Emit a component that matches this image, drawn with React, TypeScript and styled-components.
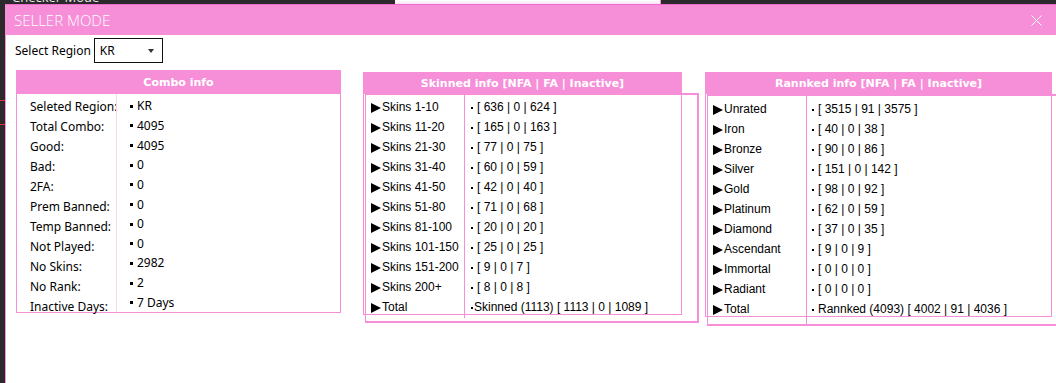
import styled, { createGlobalStyle } from "styled-components";

const PINK = "#f68fd8";

const GlobalStyle = createGlobalStyle`
  html, body {
    margin: 0;
    padding: 0;
    background: #2c292c;
    overflow: hidden;
  }
`;

const Desktop = styled.div`
  width: 1056px;
  height: 383px;
  display: flex;
  flex-direction: column;
  overflow: hidden;
`;

const TopStrip = styled.div`
  height: 4px;
  display: flex;
  flex-shrink: 0;
`;

const StripPart = styled.div<{ $w: number; $light?: boolean }>`
  width: ${(p) => p.$w}px;
  flex-shrink: 0;
  height: 4px;
  overflow: hidden;
  background: ${(p) => (p.$light ? "linear-gradient(#ffffff, #fbe3f5)" : "#2c292c")};
  border-right: ${(p) => (p.$light ? `1px solid ${PINK}` : "none")};
`;

const BgTitle = styled.span`
  display: block;
  margin: -10px 0 0 12px;
  font-family: "Open Sans", sans-serif;
  font-size: 13px;
  line-height: 14px;
  color: #e8e8e8;
  white-space: nowrap;
`;

const MainRow = styled.div`
  flex: 1;
  display: flex;
  min-height: 0;
`;

const LeftStrip = styled.div`
  width: 5px;
  flex-shrink: 0;
  display: flex;
  flex-direction: column;
  padding-top: 96px;
  gap: 23px;
`;

const RedMark = styled.div`
  height: 1px;
  background: #e0303a;
`;

const Window = styled.div`
  flex: 1;
  display: flex;
  flex-direction: column;
  background: #fff;
  border-left: 1px solid ${PINK};
  border-top: 1px solid #ee6acc;
  overflow: hidden;
`;

const TitleBar = styled.div`
  height: 30px;
  flex-shrink: 0;
  background: ${PINK};
  display: flex;
  align-items: center;
  justify-content: space-between;
  padding: 0 14px 0 8px;
`;

const Title = styled.span`
  font-family: "Open Sans", sans-serif;
  font-weight: 300;
  font-size: 15px;
  color: #fff;
`;

const Content = styled.div`
  padding: 3px 0 0 9px;
  display: flex;
  flex-direction: column;
`;

const RegionRow = styled.div`
  display: flex;
  align-items: center;
  height: 25px;
  gap: 3px;
`;

const RegionLabel = styled.span`
  font-family: "Noto Sans", sans-serif;
  font-size: 12px;
  color: #000;
`;

const Combo = styled.div`
  display: flex;
  align-items: center;
  justify-content: space-between;
  padding: 0 8px 0 5px;
  box-sizing: border-box;
  width: 69px;
  height: 25px;
  border: 1px solid #111;
  font-family: "Noto Sans", sans-serif;
  font-size: 12px;
  color: #000;
`;

const Caret = styled.span`
  width: 0;
  height: 0;
  border-left: 3px solid transparent;
  border-right: 3px solid transparent;
  border-top: 4px solid #333;
`;

const PanelRow = styled.div`
  display: flex;
  align-items: flex-start;
  padding-left: 1px;
  margin-top: 7px;
`;

const Panel = styled.div<{ $w: number; $ml: number; $mt: number }>`
  position: relative;
  width: ${(p) => p.$w}px;
  margin-left: ${(p) => p.$ml}px;
  margin-top: ${(p) => p.$mt}px;
  flex-shrink: 0;
`;

const Header = styled.div<{ $h: number }>`
  height: ${(p) => p.$h}px;
  background: ${PINK};
  display: flex;
  align-items: center;
  justify-content: center;
  font-family: "DejaVu Sans", sans-serif;
  font-weight: bold;
  font-size: 11px;
  color: #fff;
`;

const Body = styled.div<{ $h: number }>`
  height: ${(p) => p.$h}px;
  box-sizing: border-box;
  border: 1px solid ${PINK};
  border-top: none;
  display: flex;
  align-items: flex-start;
`;

const LabelCol = styled.div<{ $w: number; $pl: number; $pt: number }>`
  width: ${(p) => p.$w}px;
  padding: ${(p) => p.$pt}px 0 0 ${(p) => p.$pl}px;
  box-sizing: border-box;
  flex-shrink: 0;
  display: flex;
  flex-direction: column;
`;

const ValueCol = styled.div<{ $pl: number; $pt: number; $extra: number; $line: string }>`
  flex: 1;
  height: calc(100% + ${(p) => p.$extra}px);
  border-left: 1px solid ${(p) => p.$line};
  padding: ${(p) => p.$pt}px 0 0 ${(p) => p.$pl}px;
  box-sizing: border-box;
  display: flex;
  flex-direction: column;
`;

const Cell = styled.div<{ $arial?: boolean }>`
  height: 20px;
  display: flex;
  align-items: center;
  white-space: nowrap;
  font-family: ${(p) => (p.$arial ? '"Liberation Sans", Arial' : '"Noto Sans"')}, sans-serif;
  font-size: 12px;
  color: #000;
`;

const Arrow = styled.span`
  width: 0;
  height: 0;
  border-left: 10px solid #000;
  border-top: 5px solid transparent;
  border-bottom: 5px solid transparent;
  margin: 1px 1px 0 0;
  flex-shrink: 0;
`;

const Dot = styled.span<{ $size: number; $gap: number }>`
  width: ${(p) => p.$size}px;
  height: ${(p) => p.$size}px;
  background: #000;
  margin: 1px ${(p) => p.$gap}px 0 0;
  flex-shrink: 0;
`;

const OuterFrame = styled.div<{ $l: number; $t: number; $w: number; $h: number }>`
  position: absolute;
  left: ${(p) => p.$l}px;
  top: ${(p) => p.$t}px;
  width: ${(p) => p.$w}px;
  height: ${(p) => p.$h}px;
  border: 2px solid ${PINK};
  border-left-width: 1px;
  box-sizing: border-box;
  pointer-events: none;
`;

const CloseIcon = () => (
  <svg width="11" height="11" viewBox="0 0 11 11">
    <path d="M0.5 0.5 L10.5 10.5 M10.5 0.5 L0.5 10.5" stroke="#fff" strokeWidth="1" />
  </svg>
);

const comboRows: [string, string][] = [
  ["Seleted Region:", "KR"],
  ["Total Combo:", "4095"],
  ["Good:", "4095"],
  ["Bad:", "0"],
  ["2FA:", "0"],
  ["Prem Banned:", "0"],
  ["Temp Banned:", "0"],
  ["Not Played:", "0"],
  ["No Skins:", "2982"],
  ["No Rank:", "2"],
  ["Inactive Days:", "7 Days"],
];

const skinRows: [string, string, number][] = [
  ["Skins 1-10", "[ 636 | 0 | 624 ]", 4],
  ["Skins 11-20", "[ 165 | 0 | 163 ]", 4],
  ["Skins 21-30", "[ 77 | 0 | 75 ]", 4],
  ["Skins 31-40", "[ 60 | 0 | 59 ]", 4],
  ["Skins 41-50", "[ 42 | 0 | 40 ]", 4],
  ["Skins 51-80", "[ 71 | 0 | 68 ]", 4],
  ["Skins 81-100", "[ 20 | 0 | 20 ]", 4],
  ["Skins 101-150", "[ 25 | 0 | 25 ]", 4],
  ["Skins 151-200", "[ 9 | 0 | 7 ]", 4],
  ["Skins 200+", "[ 8 | 0 | 8 ]", 4],
  ["Total", "Skinned (1113) [ 1113 | 0 | 1089 ]", 1],
];

const rankRows: [string, string][] = [
  ["Unrated", "[ 3515 | 91 | 3575 ]"],
  ["Iron", "[ 40 | 0 | 38 ]"],
  ["Bronze", "[ 90 | 0 | 86 ]"],
  ["Silver", "[ 151 | 0 | 142 ]"],
  ["Gold", "[ 98 | 0 | 92 ]"],
  ["Platinum", "[ 62 | 0 | 59 ]"],
  ["Diamond", "[ 37 | 0 | 35 ]"],
  ["Ascendant", "[ 9 | 0 | 9 ]"],
  ["Immortal", "[ 0 | 0 | 0 ]"],
  ["Radiant", "[ 0 | 0 | 0 ]"],
  ["Total", "Rannked (4093) [ 4002 | 91 | 4036 ]"],
];

export default function App() {
  return (
    <>
      <GlobalStyle />
      <Desktop>
        <TopStrip>
          <StripPart $w={395}>
            <BgTitle>Checker Mode</BgTitle>
          </StripPart>
          <StripPart $w={265} $light />
          <StripPart $w={396} />
        </TopStrip>
        <MainRow>
          <LeftStrip>
            <RedMark />
            <RedMark />
          </LeftStrip>
          <Window>
            <TitleBar>
              <Title>SELLER MODE</Title>
              <CloseIcon />
            </TitleBar>
            <Content>
              <RegionRow>
                <RegionLabel>Select Region</RegionLabel>
                <Combo>
                  KR
                  <Caret />
                </Combo>
              </RegionRow>
              <PanelRow>
                <Panel $w={325} $ml={0} $mt={0}>
                  <Header $h={24}>Combo info</Header>
                  <Body $h={219}>
                    <LabelCol $w={99} $pl={13} $pt={2}>
                      {comboRows.map(([l]) => (
                        <Cell key={l}>{l}</Cell>
                      ))}
                    </LabelCol>
                    <ValueCol $pl={13} $pt={2} $extra={0} $line="#f8d6ee">
                      {comboRows.map(([l, v]) => (
                        <Cell key={l}>
                          <Dot $size={3} $gap={4} />
                          {v}
                        </Cell>
                      ))}
                    </ValueCol>
                  </Body>
                </Panel>

                <Panel $w={319} $ml={22} $mt={2}>
                  <Header $h={22}>Skinned info [NFA | FA | Inactive]</Header>
                  <Body $h={221}>
                    <LabelCol $w={100} $pl={7} $pt={3}>
                      {skinRows.map(([l]) => (
                        <Cell $arial key={l}>
                          <Arrow />
                          {l}
                        </Cell>
                      ))}
                    </LabelCol>
                    <ValueCol $pl={6} $pt={3} $extra={4} $line={PINK}>
                      {skinRows.map(([l, v, g]) => (
                        <Cell $arial key={l}>
                          <Dot $size={2} $gap={g} />
                          {v}
                        </Cell>
                      ))}
                    </ValueCol>
                  </Body>
                  <OuterFrame $l={2} $t={21} $w={334} $h={230} />
                </Panel>

                <Panel $w={347} $ml={23} $mt={2}>
                  <Header $h={22}>Rannked info [NFA | FA | Inactive]</Header>
                  <Body $h={223}>
                    <LabelCol $w={100} $pl={7} $pt={5}>
                      {rankRows.map(([l]) => (
                        <Cell $arial key={l}>
                          <Arrow />
                          {l}
                        </Cell>
                      ))}
                    </LabelCol>
                    <ValueCol $pl={5} $pt={5} $extra={8} $line={PINK}>
                      {rankRows.map(([l, v]) => (
                        <Cell $arial key={l}>
                          <Dot $size={2} $gap={4} />
                          {v}
                        </Cell>
                      ))}
                    </ValueCol>
                  </Body>
                  <OuterFrame $l={2} $t={22} $w={360} $h={232} />
                </Panel>
              </PanelRow>
            </Content>
          </Window>
        </MainRow>
      </Desktop>
    </>
  );
}
